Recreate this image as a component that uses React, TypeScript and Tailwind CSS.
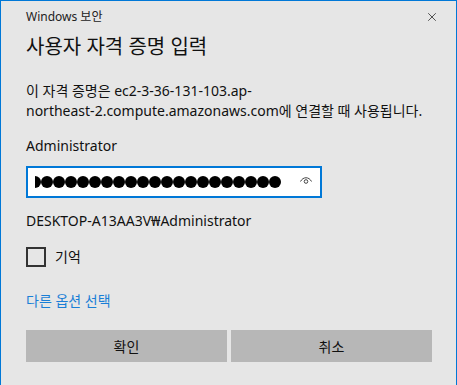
import { X } from "lucide-react";

const font = "font-['Noto_Sans','Noto_Sans_CJK_KR',sans-serif]";

function EyeIcon() {
  return (
    <svg width="14" height="10" viewBox="0 0 14 10" fill="none" className="text-[#444]">
      <path d="M1.5 6.5 C4 1.5 10 1.5 12.5 6.5" stroke="currentColor" strokeWidth="1" />
      <circle cx="7" cy="6.5" r="1.8" stroke="currentColor" strokeWidth="1" />
    </svg>
  );
}

function PasswordBox() {
  const dots = Array.from({ length: 21 });
  return (
    <div className="mt-[10px] w-[296px] h-[32px] border-2 border-[#0078d7] bg-white flex items-center">
      <div className="ml-[7px] w-[247px] h-[12px] overflow-hidden">
        <div className="flex gap-[0.5px] -ml-[6px]">
          {dots.map((_, i) => (
            <span key={i} className="block w-[11.5px] h-[12px] shrink-0 rounded-full bg-black" />
          ))}
        </div>
      </div>
      <div className="ml-auto mr-[7px] mt-[-4px] flex">
        <EyeIcon />
      </div>
    </div>
  );
}

export default function App() {
  return (
    <div className={`w-[457px] h-[385px] bg-[#e6e6e6] border-l border-t border-r border-[#0078d7] text-[#000] ${font}`}>
      <div className="pl-[25px] pr-[17px]">
        <div className="mt-[7px] h-[18px] flex items-center justify-between">
          <span className="text-[12px] leading-[18px] text-[#222]">Windows 보안</span>
          <X className="w-[14px] h-[14px] text-[#222]" strokeWidth={1.3} />
        </div>
        <div className="mt-[7px] text-[20px] leading-[28px] text-[#111]">사용자 자격 증명 입력</div>
        <div className="mt-[20px] text-[14px] leading-[20px] text-[#111]">
          <div>이 자격 증명은 ec2-3-36-131-103.ap-</div>
          <div>northeast-2.compute.amazonaws.com에 연결할 때 사용됩니다.</div>
        </div>
        <div className="mt-[15px] text-[14px] leading-[20px] text-[#111]">Administrator</div>
        <PasswordBox />
        <div className="mt-[13px] text-[14px] leading-[20px] text-[#111]">DESKTOP-A13AA3V₩Administrator</div>
        <label className="mt-[16px] h-[20px] flex items-center gap-[9px]">
          <span className="block w-[20px] h-[20px] border-2 border-[#333]" />
          <span className="text-[14px] leading-[20px] text-[#111]">기억</span>
        </label>
        <div className="mt-[24px] text-[14px] leading-[20px] text-[#1a7fd6]">다른 옵션 선택</div>
        <div className="mt-[19px] w-[406px] grid grid-cols-2 gap-[4px]">
          <button className="h-[32px] bg-[#b7b7b7] text-[14px] text-[#111]">확인</button>
          <button className="h-[32px] bg-[#b7b7b7] text-[14px] text-[#111]">취소</button>
        </div>
      </div>
    </div>
  );
}
